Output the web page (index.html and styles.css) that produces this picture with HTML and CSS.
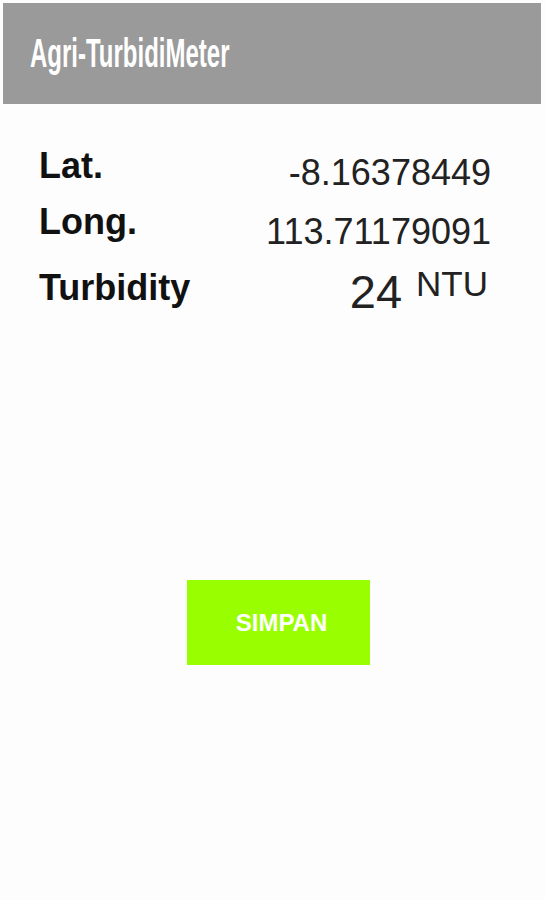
FILE: index.html
```html
<!DOCTYPE html>
<html lang="id">
<head>
    <meta charset="UTF-8">
    <meta name="viewport" content="width=device-width, initial-scale=1.0">
    <title>Agri-TurbidiMeter</title>
    <link rel="stylesheet" href="styles.css">
</head>
<body>

    <!-- Barra de título -->
    <header class="app-bar">
        <h1 class="app-title">Agri-TurbidiMeter</h1>
    </header>

    <!-- Lecturas -->
    <section class="readings">
        <div class="label">Lat.</div>
        <div class="value value-lat">-8.16378449</div>

        <div class="label">Long.</div>
        <div class="value value-long">113.71179091</div>

        <div class="label">Turbidity</div>
        <div class="value value-turb"><span class="turb-number">24</span> <span class="turb-unit">NTU</span></div>
    </section>

    <div class="actions">
        <button class="save-btn">SIMPAN</button>
    </div>

</body>
</html>
```
FILE: styles.css
```css
/* Reset */
* {
    margin: 0;
    padding: 0;
    box-sizing: border-box;
}

body {
    font-family: 'Liberation Sans', Arial, sans-serif;
    background-color: #fdfdfd;
    color: #111;
    padding: 3px 4px 0 3px;
}

/* Barra superior */
.app-bar {
    height: 101px;
    background-color: #9a9a9a;
    display: flex;
    align-items: center;
    padding-left: 27px;
}

.app-title {
    font-family: 'Liberation Sans', Arial, sans-serif;
    font-size: 40px;
    font-weight: bold;
    color: #fff;
    transform: scaleX(0.6);
    transform-origin: left center;
    white-space: nowrap;
}

/* Lecturas */
.readings {
    display: grid;
    grid-template-columns: 1fr auto;
    grid-template-rows: 56px 66px auto;
    padding: 42px 50px 0 36px;
}

.label {
    font-size: 36px;
    font-weight: bold;
    line-height: 40px;
    color: #111;
}

.value {
    font-size: 36px;
    line-height: 40px;
    color: #222;
    text-align: right;
}

.value-lat {
    padding-top: 7px;
}

.value-long {
    padding-top: 10px;
}

.value-turb {
    line-height: 48px;
}

.turb-number {
    font-size: 47px;
}

.turb-unit {
    font-size: 35px;
    line-height: 30px;
    vertical-align: 12px;
    margin-left: 4px;
    padding-right: 3px;
}

/* Botón */
.actions {
    padding: 260px 0 0 184px;
}

.save-btn {
    width: 183px;
    height: 85px;
    border: none;
    padding-left: 6px;
    background-color: #99ff00;
    color: #fff;
    font-family: 'Liberation Sans', Arial, sans-serif;
    font-size: 24px;
    font-weight: bold;
}
```
